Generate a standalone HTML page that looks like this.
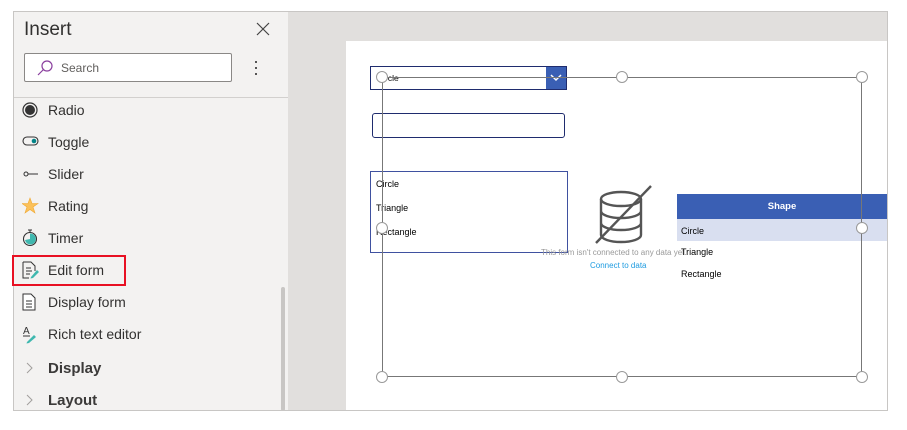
<!DOCTYPE html><html><head><style>
body{margin:0;width:907px;height:430px;background:#fff;font-family:"Liberation Sans",sans-serif;position:relative;overflow:hidden}
.a{position:absolute}
.it{position:absolute;left:48px;font-size:14px;color:#323130}
.ic{position:absolute;left:22px}
.h{position:absolute;width:12px;height:12px;border:1.5px solid #999;border-radius:50%;background:#fff;box-sizing:border-box}
</style></head><body>
<div class="a" style="left:13px;top:11px;width:875px;height:400px;border:1px solid #c8c6c4;box-sizing:border-box;background:#e1dfdd"></div>
<div class="a" style="left:14px;top:12px;width:274px;height:398px;background:#f3f2f1"></div>
<div class="a" style="left:24px;top:19px;font-size:19px;color:#323130">Insert</div>
<svg class="a" style="left:256px;top:22px" width="14" height="14"><path d="M1 1L13 13M13 1L1 13" stroke="#444" stroke-width="1.2"/></svg>
<div class="a" style="left:24px;top:53px;width:208px;height:29px;border:1px solid #8a8886;border-radius:2px;background:#fff;box-sizing:border-box"></div>
<svg class="a" style="left:36px;top:59px" width="18" height="18"><circle cx="11" cy="7" r="5" fill="none" stroke="#8a3f9e" stroke-width="1.2"/><path d="M7.5 10.5L2 16" stroke="#8a3f9e" stroke-width="1.2"/></svg>
<div class="a" style="left:61px;top:61px;font-size:12px;color:#605e5c">Search</div>
<div class="a" style="left:255px;top:61px;width:2px;height:2px;background:#555;box-shadow:0 6px #555,0 12px #555"></div>
<div class="a" style="left:14px;top:97px;width:274px;height:1px;background:#d2d0ce"></div>
<svg class="ic" style="top:102px" width="18" height="18"><circle cx="8" cy="8" r="7" fill="none" stroke="#333" stroke-width="1.2"/><circle cx="8" cy="8" r="5" fill="#333"/></svg>
<div class="it" style="top:102px">Radio</div>
<svg class="ic" style="top:136px" width="18" height="12"><rect x="1" y="1" width="15" height="8" rx="4" fill="none" stroke="#333" stroke-width="1.1"/><circle cx="12" cy="5" r="2.3" fill="#038387"/></svg>
<div class="it" style="top:134px">Toggle</div>
<svg class="ic" style="top:168px" width="18" height="12"><circle cx="4" cy="6" r="2" fill="none" stroke="#333"/><path d="M6 6H16" stroke="#333"/></svg>
<div class="it" style="top:166px">Slider</div>
<svg class="ic" style="top:197px" width="18" height="18"><path d="M8 1L10 6.5H16L11 10L13 16L8 12.5L3 16L5 10L0 6.5H6Z" fill="#fbc15a" stroke="#f0a830" stroke-width=".6"/></svg>
<div class="it" style="top:198px">Rating</div>
<svg class="ic" style="top:228px" width="18" height="20"><circle cx="8" cy="11" r="6.5" fill="none" stroke="#333" stroke-width="1.1"/><path d="M8 11V5.5A5.5 5.5 0 1 1 3 12Z" fill="#3fb8af"/><path d="M6 2H10M8 2V4.5" stroke="#333"/></svg>
<div class="it" style="top:230px">Timer</div>
<div class="a" style="left:12px;top:255px;width:114px;height:31px;border:2px solid #e81123;box-sizing:border-box"></div>
<svg class="ic" style="top:261px" width="18" height="19"><path d="M1 1H9L13 5V10M1 1V17H7" fill="none" stroke="#333"/><path d="M4 7H9M4 10H10M4 13H8" stroke="#333"/><path d="M9 16L15 9L17 11L11 17L8.5 17.5Z" fill="#3fb8af"/></svg>
<div class="it" style="top:262px">Edit form</div>
<svg class="ic" style="top:293px" width="18" height="19"><path d="M1 1H9L13 5V17H1Z" fill="#fff" stroke="#333"/><path d="M4 8H10M4 11H10M4 14H10" stroke="#333"/></svg>
<div class="it" style="top:294px">Display form</div>
<svg class="ic" style="top:325px" width="18" height="19"><text x="1" y="9" font-size="10" fill="#333" font-family="Liberation Sans">A</text><path d="M1 11H8" stroke="#333"/><path d="M5 17L12 10L14 12L7 18L4.5 18.5Z" fill="#3fb8af"/></svg>
<div class="it" style="top:326px">Rich text editor</div>
<svg class="a" style="left:25px;top:362px" width="8" height="12"><path d="M2 1L7 6L2 11" fill="none" stroke="#a19f9d"/></svg>
<div class="it" style="top:360px;font-size:15px;font-weight:bold;color:#3b3a39">Display</div>
<svg class="a" style="left:25px;top:394px" width="8" height="12"><path d="M2 1L7 6L2 11" fill="none" stroke="#a19f9d"/></svg>
<div class="it" style="top:392px;font-size:15px;font-weight:bold;color:#3b3a39">Layout</div>
<div class="a" style="left:281px;top:287px;width:4px;height:124px;background:#c8c6c4;border-radius:2px"></div>
<div class="a" style="left:346px;top:41px;width:541px;height:369px;background:#fff"></div>
<div class="a" style="left:370px;top:66px;width:197px;height:24px;border:1px solid #1f2c6e;box-sizing:border-box;background:#fff"></div>
<div class="a" style="left:546px;top:67px;width:20px;height:22px;background:#3a5fb4"></div>
<svg class="a" style="left:550px;top:74px" width="12" height="8"><path d="M1 1L6 6L11 1" fill="none" stroke="#fff" stroke-width="1.5"/></svg>
<div class="a" style="left:385px;top:73px;font-size:8.5px">rcle</div>
<div class="a" style="left:372px;top:113px;width:193px;height:25px;border:1.5px solid #1f2c6e;border-radius:3px;box-sizing:border-box"></div>
<div class="a" style="left:370px;top:171px;width:198px;height:82px;border:1px solid #3f51a0;box-sizing:border-box"></div>
<div class="a" style="left:376px;top:179px;font-size:9px">Circle</div>
<div class="a" style="left:376px;top:203px;font-size:9px">Triangle</div>
<div class="a" style="left:376px;top:227px;font-size:9px">Rectangle</div>
<svg class="a" style="left:590px;top:184px" width="66" height="62"><g fill="none" stroke="#555" stroke-width="2.4"><ellipse cx="31" cy="15" rx="20" ry="7"/><path d="M11 15V51A20 7 0 0 0 51 51V15M11 27A20 7 0 0 0 51 27M11 39A20 7 0 0 0 51 39"/><path d="M61 2L6 59"/></g></svg>
<div class="a" style="left:541px;top:248px;font-size:8px;color:#999">This form isn't connected to any data yet.</div>
<div class="a" style="left:590px;top:261px;font-size:8px;color:#1e9be0">Connect to data</div>
<div class="a" style="left:677px;top:194px;width:210px;height:25px;background:#3a5fb4;color:#fff;font-size:9.5px;font-weight:bold;text-align:center;line-height:25px">Shape</div>
<div class="a" style="left:677px;top:219px;width:210px;height:22px;background:#d9dff0"></div>
<div class="a" style="left:681px;top:226px;font-size:9px">Circle</div>
<div class="a" style="left:681px;top:247px;font-size:9px">Triangle</div>
<div class="a" style="left:681px;top:269px;font-size:9px">Rectangle</div>
<div class="a" style="left:382px;top:77px;width:480px;height:300px;border:1.5px solid #777;box-sizing:border-box"></div>
<div class="h" style="left:376px;top:71px"></div><div class="h" style="left:616px;top:71px"></div><div class="h" style="left:856px;top:71px"></div>
<div class="h" style="left:376px;top:222px"></div><div class="h" style="left:856px;top:222px"></div>
<div class="h" style="left:376px;top:371px"></div><div class="h" style="left:616px;top:371px"></div><div class="h" style="left:856px;top:371px"></div>
</body></html>
